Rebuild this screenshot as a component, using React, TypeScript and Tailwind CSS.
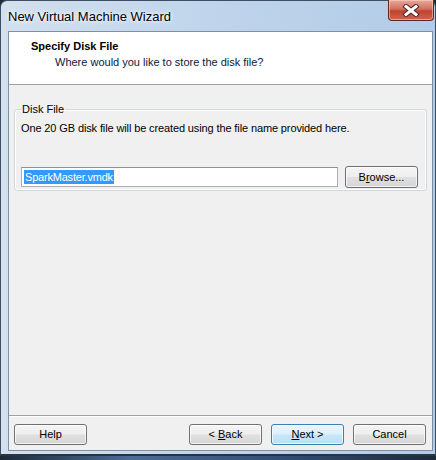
import React from "react";

type BtnProps = {
  children: React.ReactNode;
  primary?: boolean;
  className?: string;
};

// Win7 style push button
const WinButton = ({ children, primary, className }: BtnProps) => {
  return (
    <button
      className={
        (primary
          ? "border-[#3c7fb1] bg-[linear-gradient(to_bottom,#eaf6fd,#dcf0fc_48%,#c8e6f8_52%,#bcdff3)] "
          : "border-[#707070] bg-[linear-gradient(to_bottom,#f5f5f5,#eeeeee_48%,#e0e0e0_52%,#d5d5d5)] ") +
        "flex items-center justify-center rounded-[3px] border text-[11px] leading-none text-black shadow-[inset_0_0_0_1px_rgba(255,255,255,0.7)] " +
        (className ?? "")
      }
    >
      <span className="whitespace-pre">{children}</span>
    </button>
  );
};

export default function App() {
  return (
    <div className="relative h-[460px] w-[436px] overflow-hidden bg-[linear-gradient(to_right,#1d2a38,#4a6d96_30%,#2c4a6e_70%,#1d2a38)] font-['Liberation_Sans',Arial,sans-serif]">
      <div className="flex h-[456px] flex-col rounded-t-[7px] border border-b-2 border-[#3e4f63] border-b-[#2a3441] bg-[linear-gradient(to_right,#d3e0ee,#c2d6ec_40%,#b2cbe7)] pb-[3px] pl-[7px] pr-[2px]">
        {/* title bar */}
        <div className="flex h-[30px] shrink-0 items-start justify-between">
          <span className="mt-[8px] text-[13px] leading-[15px] text-black [text-shadow:0_0_6px_#fff,0_0_3px_#fff]">
            New Virtual Machine Wizard
          </span>
          <div className="-mt-px mr-[-1px] flex h-[21px] w-[46px] items-center justify-center rounded-b-[4px] border border-t-0 border-[#5c2a24] bg-[linear-gradient(to_bottom,#e9a99b,#d3705e_45%,#c0412f_55%,#d0654f)] shadow-[inset_0_0_0_1px_rgba(255,220,210,0.5)]">
            <svg width="18" height="13" viewBox="0 0 18 13">
              <path d="M4 2.5 L14 10.5 M14 2.5 L4 10.5" stroke="#4a2a2a" strokeWidth="5" strokeLinecap="square" />
              <path d="M4 2.5 L14 10.5 M14 2.5 L4 10.5" stroke="#ffffff" strokeWidth="3" strokeLinecap="square" />
            </svg>
          </div>
        </div>

        {/* client area */}
        <div className="flex flex-1 flex-col border border-[#7d90a8] bg-[#f0f0f0] text-[11px] leading-[14px] text-black">
          <div className="h-[53px] shrink-0 border-b border-[#a0a0a0] bg-white pt-[7px]">
            <div className="pl-[22px] font-bold">Specify Disk File</div>
            <div className="mt-[2px] pl-[46px] text-[#0a1a3a]">Where would you like to store the disk file?</div>
          </div>

          <div className="px-[5px] pt-[17px]">
            <fieldset className="rounded-[3px] border border-[#d0d7dd] pb-[2px] pl-[6px] pr-[8px] shadow-[inset_0_0_0_1px_#ffffff]">
              <legend className="px-[1px]">Disk File</legend>
              <div className="pt-[5px] tracking-[-0.12px]">
                One 20 GB disk file will be created using the file name provided here.
              </div>
              <div className="mt-[31px] flex items-center gap-[7px]">
                <div className="flex h-[20px] flex-1 items-center border border-[#abadb3] border-t-[#8e939b] bg-white pl-[2px]">
                  <span className="bg-[#3399ff] px-[1px] tracking-[-0.2px] text-white">SparkMaster.vmdk</span>
                </div>
                <WinButton className="h-[22px] w-[73px]">
                  B<span className="underline">r</span>owse...
                </WinButton>
              </div>
            </fieldset>
          </div>

          <div className="flex-1" />

          <div className="flex shrink-0 items-center border-t border-[#a0a0a0] pb-[5px] pl-[5px] pr-[6px] pt-[8px] shadow-[inset_0_1px_0_#ffffff]">
            <WinButton className="h-[21px] w-[73px]">Help</WinButton>
            <div className="flex-1" />
            <div className="flex gap-[9px]">
              <WinButton className="h-[21px] w-[73px]">
                {"< "}
                <span className="underline">B</span>ack
              </WinButton>
              <WinButton primary className="h-[21px] w-[73px]">
                <span className="underline">N</span>
                {"ext >"}
              </WinButton>
              <WinButton className="h-[21px] w-[73px]">Cancel</WinButton>
            </div>
          </div>
        </div>
      </div>
    </div>
  );
}
